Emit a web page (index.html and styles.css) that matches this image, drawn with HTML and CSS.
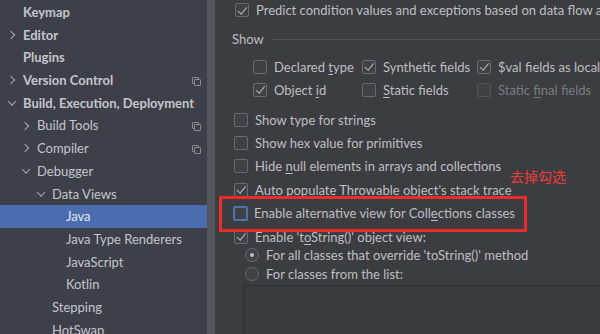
FILE: index.html
```html
<!DOCTYPE html>
<html>
<head>
<meta charset="utf-8">
<link rel="stylesheet" href="styles.css">
</head>
<body>
<div class="sidebar">
  <div class="row l0 bold">Keymap</div>
  <div class="row l0 bold"><span class="arrow right"></span>Editor</div>
  <div class="row l0 bold">Plugins</div>
  <div class="row l0 bold"><span class="arrow right"></span>Version Control<span class="proj"></span></div>
  <div class="row l0 bold"><span class="arrow down"></span>Build, Execution, Deployment</div>
  <div class="row l1"><span class="arrow right"></span>Build Tools<span class="proj"></span></div>
  <div class="row l1"><span class="arrow right"></span>Compiler<span class="proj"></span></div>
  <div class="row l1"><span class="arrow down"></span>Debugger</div>
  <div class="row l2"><span class="arrow down"></span>Data Views</div>
  <div class="row l3 selected">Java</div>
  <div class="row l3">Java Type Renderers</div>
  <div class="row l3">JavaScript</div>
  <div class="row l3">Kotlin</div>
  <div class="row l2">Stepping</div>
  <div class="row l2">HotSwap</div>
  <div class="scrollbar"></div>
</div>
<div class="main">
  <div class="opt top"><span class="cb checked"></span><span class="lbl">Predict condition values and exceptions based on data flow analysis</span></div>
  <div class="group-title"><span>Show</span><span class="rule"></span></div>
  <div class="show-grid">
    <div class="opt"><span class="cb"></span><span class="lbl">Declared <u>t</u>ype</span></div>
    <div class="opt"><span class="cb checked"></span><span class="lbl">Synthetic fields</span></div>
    <div class="opt"><span class="cb checked"></span><span class="lbl">$val fields as local variables</span></div>
    <div class="opt"><span class="cb checked"></span><span class="lbl">Object <u>i</u>d</span></div>
    <div class="opt"><span class="cb"></span><span class="lbl"><u>S</u>tatic fields</span></div>
    <div class="opt disabled"><span class="cb"></span><span class="lbl">Static <u>f</u>inal fields</span></div>
  </div>
  <div class="list">
    <div class="opt"><span class="cb"></span><span class="lbl">Show type for strings</span></div>
    <div class="opt"><span class="cb"></span><span class="lbl">Show hex value for primitives</span></div>
    <div class="opt"><span class="cb"></span><span class="lbl">Hide <u>n</u>ull elements in arrays and collections</span></div>
    <div class="opt"><span class="cb checked"></span><span class="lbl">Auto populate Throwable object's stack trace</span></div>
    <div class="opt"><span class="cb focus"></span><span class="lbl">Enable alternative view for Coll<u>e</u>ctions classes</span></div>
    <div class="opt"><span class="cb checked"></span><span class="lbl">Enable 't<u>o</u>String()' object view:</span></div>
  </div>
  <div class="radios">
    <div class="opt r"><span class="radio on"></span><span class="lbl">For all classes that override 'toString()' method</span></div>
    <div class="opt r"><span class="radio"></span><span class="lbl">For classes from the list:</span></div>
  </div>
  <div class="classlist"></div>
  <div class="redbox"></div>
  <div class="note">去掉勾选</div>
</div>
</body>
</html>
```

FILE: styles.css
```css
html, body {
  margin: 0;
  padding: 0;
}
body {
  width: 600px;
  height: 334px;
  overflow: hidden;
  display: flex;
  background: #3c3d41;
  font-family: Lato, "Noto Sans", sans-serif;
  font-size: 13px;
  color: #bcbec4;
}
.sidebar {
  position: relative;
  width: 215px;
  flex: none;
  background: #3e4049;
  padding-top: 1px;
  overflow: hidden;
}
.row {
  position: relative;
  height: 22.7px;
  line-height: 22.7px;
  white-space: nowrap;
  color: #c3c5cc;
}
.bold { font-weight: 700; }
.l0 { padding-left: 23px; }
.l1 { padding-left: 37px; }
.l2 { padding-left: 52px; }
.l3 { padding-left: 66px; }
.selected { background: #4b6db0; color: #e0e4ee; margin-right: 8px; }
.arrow {
  position: absolute;
  top: 50%;
  width: 5px;
  height: 5px;
  border-right: 1.3px solid #a9abb2;
  border-bottom: 1.3px solid #a9abb2;
}
.l0 .arrow { left: 8px; }
.l1 .arrow { left: 22px; }
.l2 .arrow { left: 37px; }
.arrow.right { transform: translate(0, -50%) rotate(-45deg); }
.arrow.down { transform: translate(1px, -75%) rotate(45deg); }
.proj {
  position: absolute;
  left: 192px;
  top: 8px;
  width: 5px;
  height: 5px;
  border: 1px solid #8a8c93;
  border-radius: 1px;
}
.proj::after {
  content: "";
  position: absolute;
  left: 1px;
  top: 1px;
  width: 5px;
  height: 5px;
  border: 1px solid #8a8c93;
  background: #3e4049;
  border-radius: 1px;
}
.scrollbar {
  position: absolute;
  right: 0;
  top: 0;
  bottom: 0;
  width: 8px;
  background: rgba(255, 255, 255, 0.11);
}
.main {
  position: relative;
  flex: 1;
  min-width: 0;
  overflow: hidden;
  padding-left: 18px;
  color: #bdbfc4;
}
.opt {
  display: flex;
  align-items: center;
  white-space: nowrap;
  height: 20px;
}
.lbl { white-space: pre; }
.opt u { text-decoration-thickness: 1px; text-underline-offset: 2px; }
.cb {
  flex: none;
  width: 12px;
  height: 12px;
  border: 1px solid #6a6b70;
  border-radius: 2px;
  background: #404145;
  margin-right: 7px;
  position: relative;
  box-sizing: content-box;
}
.cb.checked::after {
  content: "";
  position: absolute;
  left: 3.5px;
  top: 0.5px;
  width: 3.5px;
  height: 7.5px;
  border-right: 1.4px solid #b8b9bd;
  border-bottom: 1.4px solid #b8b9bd;
  transform: rotate(40deg);
}
.cb.focus {
  border: 2px solid #4a74ad;
  width: 11px;
  height: 11px;
  margin-left: -1px;
  margin-right: 6px;
}
.top { padding-left: 2px; }
.group-title {
  display: flex;
  align-items: center;
  height: 20px;
  margin-top: 9px;
  margin-left: -1px;
}
.rule {
  flex: 1;
  height: 1px;
  background: #505156;
  margin-left: 7px;
}
.show-grid {
  display: grid;
  grid-template-columns: 109px 115px 130px;
  grid-auto-rows: 23px;
  padding-left: 20px;
  margin-top: 6px;
}
.show-grid .opt { height: 23px; }
.disabled { color: #7b7c80; }
.disabled .cb { border-color: #55565a; }
.list {
  margin-top: 7px;
  padding-left: 1px;
}
.list .opt { height: 23.4px; }
.radios { padding-left: 12px; margin-top: -3px; }
.radios .opt { height: 19px; }
.radio {
  flex: none;
  width: 12px;
  height: 12px;
  border: 1px solid #6a6b70;
  border-radius: 50%;
  background: #404145;
  margin-right: 7px;
  position: relative;
}
.radio.on::after {
  content: "";
  position: absolute;
  left: 4px;
  top: 4px;
  width: 4px;
  height: 4px;
  border-radius: 50%;
  background: #bdbfc4;
}
.classlist {
  margin-left: 10px;
  margin-top: 2px;
  height: 60px;
  border-top: 1px solid #2f3033;
  border-left: 1px solid #2f3033;
  background: #3a3b3f;
}
.redbox {
  position: absolute;
  left: 4px;
  top: 196px;
  width: 302px;
  height: 30px;
  border: 3px solid #ee2b2b;
}
.note {
  position: absolute;
  left: 295px;
  top: 166px;
  font-family: "Noto Sans CJK SC", sans-serif;
  font-size: 14px;
  color: #f23a3a;
}
```
